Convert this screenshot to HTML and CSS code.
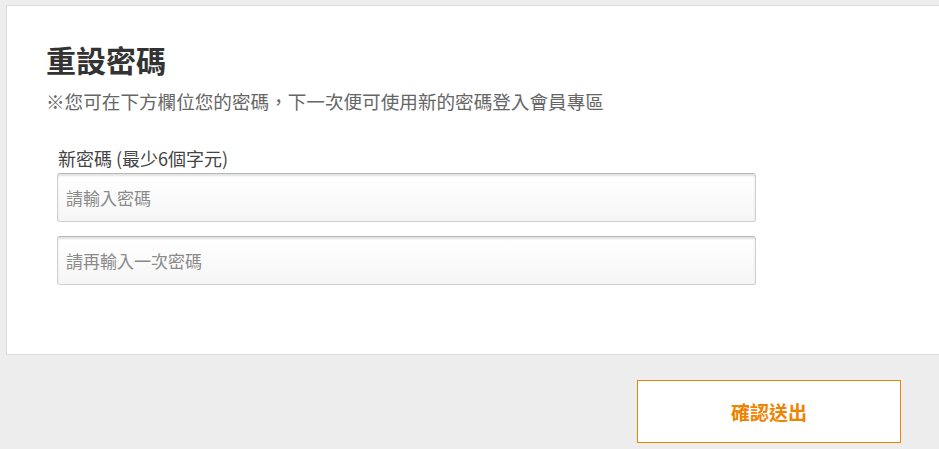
FILE: index.html
```html
<!DOCTYPE html>
<html lang="zh-Hant">
<head>
<meta charset="utf-8">
<title>重設密碼</title>
<link rel="stylesheet" href="styles.css">
</head>
<body>
<main class="page">
  <section class="card">
    <h1 class="title">重設密碼</h1>
    <p class="desc">※您可在下方欄位您的密碼，下一次便可使用新的密碼登入會員專區</p>
    <div class="field">
      <label class="label" for="pw1">新密碼 (最少6個字元)</label>
      <input class="input" id="pw1" type="password" placeholder="請輸入密碼">
      <input class="input" id="pw2" type="password" placeholder="請再輸入一次密碼">
    </div>
  </section>
  <div class="actions">
    <button class="submit" type="button">確認送出</button>
  </div>
</main>
</body>
</html>
```
FILE: styles.css
```css
html, body {
  margin: 0;
  padding: 0;
  background: #ededed;
  font-family: "Noto Sans CJK TC", "Noto Sans", sans-serif;
  overflow: hidden;
}
.page {
  padding: 5px 0 0 6px;
}
.card {
  background: #fff;
  border: 1px solid #dcdcdc;
  border-right: none;
  height: 350px;
  box-sizing: border-box;
  padding: 33px 0 0 39px;
}
.title {
  margin: 0;
  font-size: 30px;
  line-height: 40px;
  font-weight: 700;
  color: #333;
}
.desc {
  margin: 9px 0 0;
  font-size: 18.6px;
  line-height: 26px;
  color: #666;
}
.field {
  margin: 31px 0 0 11px;
  display: flex;
  flex-direction: column;
  width: 700px;
}
.label {
  font-size: 18px;
  line-height: 26px;
  color: #444;
  margin-left: 1px;
}
.input {
  box-sizing: border-box;
  height: 49px;
  width: 699px;
  margin-top: 0;
  padding: 0 8px;
  border: 1px solid #d0d0d0;
  border-top-color: #b8b8b8;
  border-radius: 3px;
  background: linear-gradient(#ffffff, #f6f6f6);
  box-shadow: inset 0 2px 2px rgba(0,0,0,0.12);
  font-family: "Noto Sans CJK TC", "Noto Sans", sans-serif;
  font-size: 17px;
  color: #333;
  outline: none;
}
.input + .input {
  margin-top: 14px;
}
.input::placeholder {
  color: #8a8a8a;
}
.field .label + .input {
  margin-top: 2px;
}
.actions {
  display: flex;
  justify-content: flex-end;
  padding: 25px 38px 0 0;
}
.submit {
  box-sizing: border-box;
  width: 264px;
  height: 63px;
  background: #fff;
  border: 1px solid #f08300;
  color: #f08300;
  font-family: "Noto Sans CJK TC", "Noto Sans", sans-serif;
  font-size: 19px;
  font-weight: 700;
  cursor: pointer;
  padding: 0;
}
```
